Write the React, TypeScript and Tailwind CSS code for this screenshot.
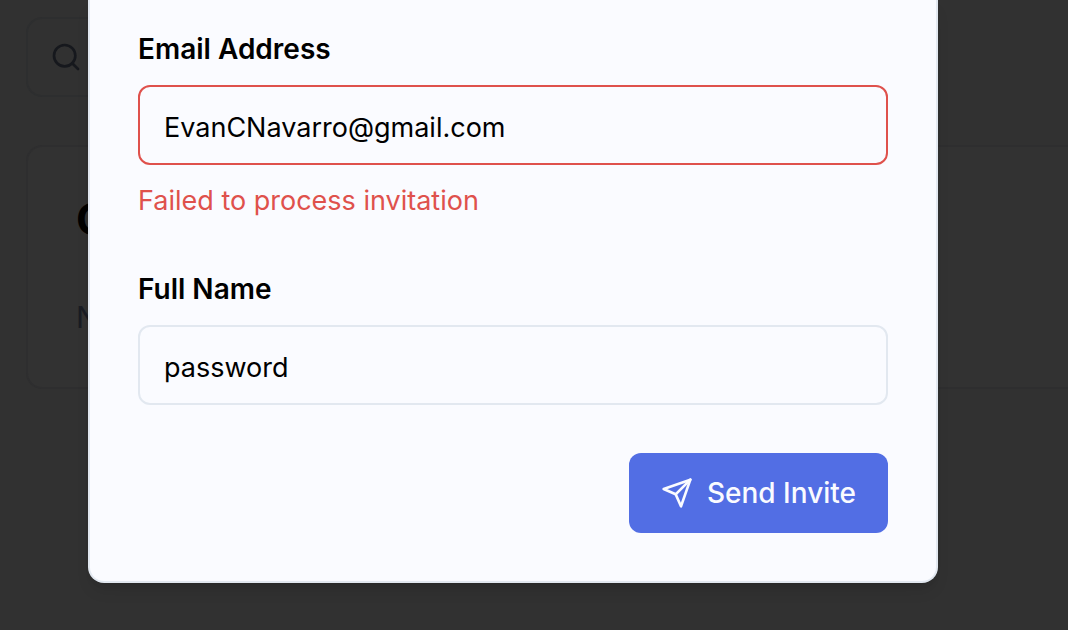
import { Search } from "lucide-react";
import type { InputHTMLAttributes } from "react";

function SendIcon() {
  return (
    <svg
      className="size-8 shrink-0"
      viewBox="0 0 24 24"
      fill="none"
      stroke="currentColor"
      strokeWidth="2"
      strokeLinecap="round"
      strokeLinejoin="round"
      aria-hidden="true"
    >
      <path d="m22 2-7 20-4-9-9-4Z" />
      <path d="M22 2 11 13" />
    </svg>
  );
}

type FieldProps = InputHTMLAttributes<HTMLInputElement> & {
  id: string;
  label: string;
  error?: string;
};

function Field({ id, label, error, ...input }: FieldProps) {
  return (
    <div className="flex flex-col gap-4">
      <label htmlFor={id} className="text-[28px] leading-10 font-semibold">
        {label}
      </label>
      <input
        id={id}
        aria-invalid={Boolean(error)}
        aria-describedby={error ? `${id}-error` : undefined}
        className={`h-20 w-full rounded-xl border-2 bg-transparent px-6 pt-1 text-[27px] outline-none ${
          error ? "border-[#df514c]" : "border-[#e2e8f0]"
        }`}
        {...input}
      />
      {error && (
        <p id={`${id}-error`} className="text-[27px] leading-10 text-[#df514c]">
          {error}
        </p>
      )}
    </div>
  );
}

function Backdrop() {
  return (
    <div className="flex flex-col gap-12 pt-[17px] pl-[26px]" aria-hidden="true">
      <div className="mr-[200px] flex h-20 items-center rounded-2xl border-2 border-[#2d2e2f] px-[22px] text-[#16181d]">
        <Search className="size-8" />
      </div>
      <div className="flex h-[244px] flex-col gap-12 rounded-l-2xl border-2 border-r-0 border-[#2e2e2f] bg-[#323232] px-12 pt-[42px]">
        <p className="text-[44px] leading-[60px] font-bold text-black">C</p>
        <p className="text-[30px] leading-10 text-[#191c23]">N</p>
      </div>
    </div>
  );
}

export default function App() {
  return (
    <div className="grid min-h-screen overflow-hidden bg-[#313131] font-['Inter',sans-serif] text-black *:col-start-1 *:row-start-1">
      <Backdrop />
      <main className="z-10 mr-[130px] ml-[88px] self-start">
        <form
          role="dialog"
          aria-label="Send Invite"
          className="flex flex-col rounded-b-2xl border-2 border-t-0 border-[#e2e8f0] bg-[#fafbff] px-12 pt-[29px] pb-12 shadow-lg"
          onSubmit={(event) => event.preventDefault()}
        >
          <div className="flex flex-col gap-12">
            <Field
              id="email"
              label="Email Address"
              type="email"
              defaultValue="EvanCNavarro@gmail.com"
              error="Failed to process invitation"
            />
            <Field id="name" label="Full Name" type="text" defaultValue="password" />
            <button
              type="submit"
              className="flex h-20 items-center gap-[14px] self-end rounded-xl bg-[#526ee4] px-8 text-[28px] font-medium text-[#fafbff]"
            >
              <SendIcon />
              Send Invite
            </button>
          </div>
        </form>
      </main>
    </div>
  );
}
